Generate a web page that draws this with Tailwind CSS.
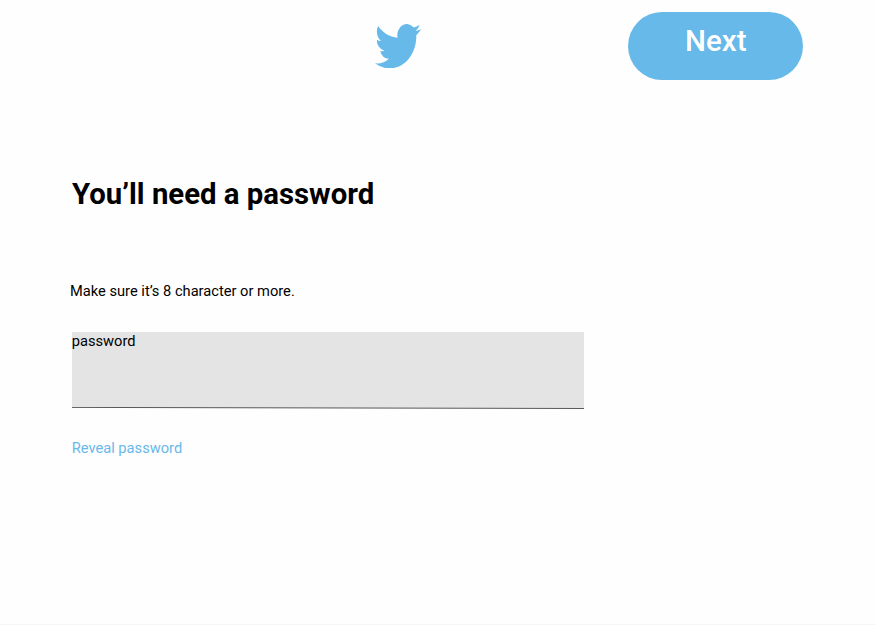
<!DOCTYPE html>
<html lang="en">
<head>
<meta charset="utf-8">
<title>You’ll need a password</title>
<script src="https://cdn.jsdelivr.net/npm/@tailwindcss/browser@4"></script>
</head>
<body class="h-[625px] overflow-hidden border-b border-[#f5f5f5] bg-[#fefefe] font-[Roboto,sans-serif] text-black">
<header class="flex h-[92px] items-start pl-[374.7px] pt-3">
  <svg class="mt-[11.7px] h-[44.4px] w-[46px] shrink-0" viewBox="0 2.25 24 19.5" preserveAspectRatio="none" fill="#67b9ea" aria-label="Twitter"><path d="M23.953 4.57a10 10 0 01-2.825.775 4.958 4.958 0 002.163-2.723c-.951.555-2.005.959-3.127 1.184a4.92 4.92 0 00-8.384 4.482C7.69 8.095 4.067 6.13 1.64 3.162a4.822 4.822 0 00-.666 2.475c0 1.71.87 3.213 2.188 4.096a4.904 4.904 0 01-2.228-.616v.06a4.923 4.923 0 003.946 4.827 4.996 4.996 0 01-2.212.085 4.936 4.936 0 004.604 3.417 9.867 9.867 0 01-6.102 2.105c-.39 0-.779-.023-1.17-.067a13.995 13.995 0 007.557 2.209c9.053 0 13.998-7.496 13.998-13.985 0-.21 0-.42-.015-.63A9.935 9.935 0 0024 4.59z"/></svg>
  <button class="ml-[207.6px] flex h-[67.5px] w-[175px] shrink-0 justify-center rounded-full bg-[#67b9ea] pt-[12px] text-[29.5px] leading-[35px] font-medium text-white">Next</button>
</header>
<main class="pl-[72px] pt-[85px]">
  <h1 class="text-[29.33px] leading-[35px] font-bold">You’ll need a password</h1>
  <p class="-ml-[2px] mt-[70px] text-[14.67px] leading-[18px]">Make sure it’s 8 character or more.</p>
  <div class="-ml-[0.3px] mt-[32.3px] h-[76.7px] w-[512px] bg-[#e4e4e4]">
    <label class="block h-[74.7px] text-[14.67px] leading-[18px]">password</label>
    <svg class="block h-[2px] w-[512px]" viewBox="0 0 512 2"><path d="M0 2H512V1.7L0 .7Z" fill="#fefefe"/><path d="M0 .4L512 1.5" stroke="#333" stroke-width=".8"/></svg>
  </div>
  <a class="mt-[30px] -ml-[0.3px] block text-[14.67px] leading-[18px] text-[#67b9ea]">Reveal password</a>
</main>
</body>
</html>
